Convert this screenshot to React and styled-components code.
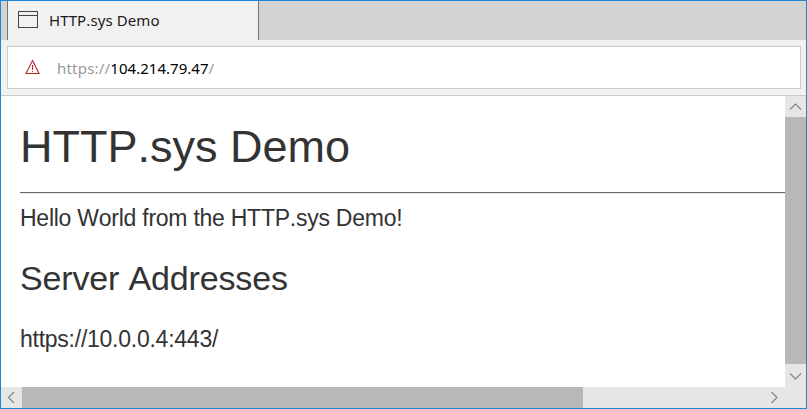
import React from "react";
import styled, { createGlobalStyle } from "styled-components";

const GlobalStyle = createGlobalStyle`
  body { margin: 0; background: #fff; }
  *, *::before, *::after { box-sizing: border-box; }
`;

const Window = styled.div`
  width: 807px;
  height: 409px;
  display: flex;
  flex-direction: column;
  border: 1px solid #1e86d6;
  background: #fff;
  overflow: hidden;
`;

const TabStrip = styled.div`
  flex: none;
  height: 39px;
  padding-left: 6px;
  display: flex;
  background: #d3d3d3;
`;

const Tab = styled.div`
  width: 252px;
  height: 39px;
  padding: 0 0 0 10px;
  display: flex;
  align-items: center;
  gap: 11px;
  background: #f1f1f1;
  border-left: 1px solid #757575;
  border-right: 1px solid #757575;
`;

const TabIcon = styled.svg`
  flex: none;
  display: block;
  margin-top: -2px;
`;

const TabTitle = styled.span`
  font: 15px/20px "Noto Sans", sans-serif;
  font-kerning: none;
  letter-spacing: 0.1px;
  color: #1a1a1a;
  white-space: nowrap;
  padding-bottom: 2px;
`;

const Toolbar = styled.div`
  flex: none;
  height: 56px;
  padding: 6px 5px 6px 6px;
  background: #f1f1f1;
  border-bottom: 1px solid #cacaca;
`;

const AddressBar = styled.div`
  height: 43px;
  padding-left: 17px;
  display: flex;
  align-items: center;
  gap: 17px;
  background: #fff;
  border: 1px solid #cacaca;
`;

const WarningIcon = styled.svg`
  flex: none;
  display: block;
  margin-top: -1px;
`;

const Url = styled.span`
  font: 15px/20px "Noto Sans", sans-serif;
  font-kerning: none;
  letter-spacing: 0.2px;
  color: #999;
  white-space: nowrap;
`;

const Host = styled.span`
  color: #000;
  letter-spacing: 0.03px;
`;

const Viewport = styled.div`
  flex: 1;
  min-height: 0;
  display: grid;
  grid-template-columns: 1fr 21px;
  grid-template-rows: 1fr 21px;
`;

const Page = styled.main`
  padding: 24px 0 0 19px;
  overflow: hidden;
  font-family: "Liberation Sans", Arial, sans-serif;
  font-kerning: none;
  color: #333;
`;

const Title = styled.h1`
  margin: 0;
  font-size: 45px;
  line-height: 54px;
  font-weight: 400;
  white-space: nowrap;
`;

const Rule = styled.hr`
  height: 2px;
  margin: 18px 0 10px;
  border: 0;
  border-top: 1px solid #666;
  border-bottom: 1px solid #eee;
`;

const Text = styled.p`
  margin: 0;
  font-size: 23px;
  line-height: 28px;
  letter-spacing: -0.25px;
  white-space: nowrap;
`;

const Subtitle = styled.h2`
  margin: 25px 0 26px;
  font-size: 34px;
  line-height: 42px;
  font-weight: 400;
  letter-spacing: -0.15px;
  white-space: nowrap;
`;

const ScrollBar = styled.div`
  display: flex;
  flex-direction: ${(p) => (p.$vertical ? "column" : "row")};
  background: #e6e6e6;
`;

const ScrollButton = styled.div`
  flex: none;
  width: 21px;
  height: 21px;
  display: grid;
  place-items: center;
`;

const Thumb = styled.div`
  flex: none;
  background: #b8b8b8;
  ${(p) => (p.$vertical ? "height" : "width")}: ${(p) => p.$length}px;
`;

const Spacer = styled.div`
  flex: 1;
`;

const Corner = styled.div`
  background: #e6e6e6;
`;

const ARROWS = {
  up: "M5 13.5 L10.5 8 L16 13.5",
  down: "M5 7.5 L10.5 13 L16 7.5",
  left: "M13 5 L7.5 10.5 L13 16",
  right: "M7.5 5 L13 10.5 L7.5 16",
};

function Arrow({ direction }) {
  return (
    <ScrollButton>
      <svg width="21" height="21" viewBox="0 0 21 21" fill="none" stroke="#858585" strokeWidth="1.2">
        <path d={ARROWS[direction]} />
      </svg>
    </ScrollButton>
  );
}

export default function App() {
  return (
    <>
      <GlobalStyle />
      <Window>
        <TabStrip>
          <Tab>
            <TabIcon width="20" height="17" viewBox="0 0 20 17" fill="none" stroke="#444" shapeRendering="crispEdges">
              <rect x="0.5" y="0.5" width="19" height="16" />
              <path d="M1 4.5H19" />
            </TabIcon>
            <TabTitle>HTTP.sys Demo</TabTitle>
          </Tab>
        </TabStrip>
        <Toolbar>
          <AddressBar>
            <WarningIcon width="15" height="16" viewBox="0 0 15 16" fill="none" stroke="#b8242a" strokeWidth="1.1">
              <path d="M7.5 1.6 L14 14.5 H1 Z" />
              <path d="M7.5 6V11M7.5 12V13.1" />
            </WarningIcon>
            <Url>
              https://<Host>104.214.79.47</Host>/
            </Url>
          </AddressBar>
        </Toolbar>
        <Viewport>
          <Page>
            <Title>HTTP.sys Demo</Title>
            <Rule />
            <Text>Hello World from the HTTP.sys Demo!</Text>
            <Subtitle>Server Addresses</Subtitle>
            <Text>https://10.0.0.4:443/</Text>
          </Page>
          <ScrollBar $vertical>
            <Arrow direction="up" />
            <Thumb $vertical $length={247} />
            <Spacer />
            <Arrow direction="down" />
          </ScrollBar>
          <ScrollBar>
            <Arrow direction="left" />
            <Thumb $length={561} />
            <Spacer />
            <Arrow direction="right" />
          </ScrollBar>
          <Corner />
        </Viewport>
      </Window>
    </>
  );
}
